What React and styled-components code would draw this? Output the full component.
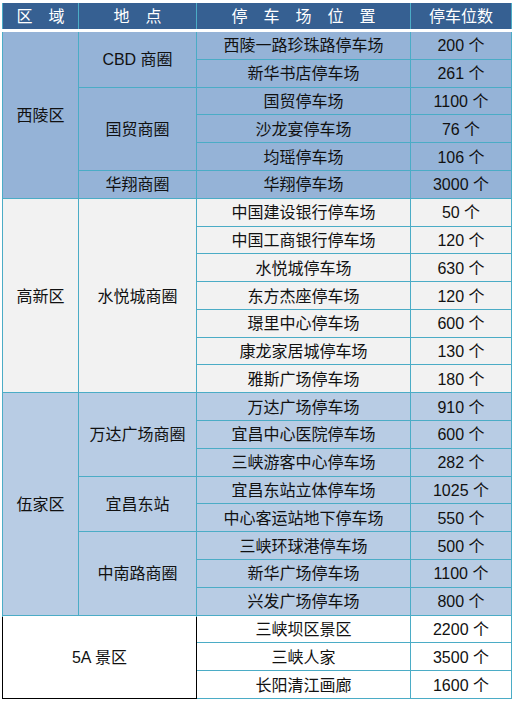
import React from "react";
import styled, { createGlobalStyle } from "styled-components";

const Global = createGlobalStyle`
  html, body { margin: 0; padding: 0; background: #ffffff; }
  body { font-family: "Liberation Sans", "Noto Sans CJK SC", sans-serif; }
`;

const Page = styled.div`
  padding: 3px 0 0 2px;
`;

const Table = styled.div`
  width: 510px;
  display: flex;
  flex-direction: column;
`;

const COLS = "75px 117px 213px 100px";

const HeaderRow = styled.div`
  display: grid;
  grid-template-columns: ${COLS};
  column-gap: 1px;
  padding: 0 1px;
  height: 26px;
  background: #4bacc6;
  border-bottom: 3px solid #ffffff;
`;

const HeadCell = styled.div`
  background: #366092;
  color: #ffffff;
  font-size: 16px;
  line-height: 1;
  padding-top: 2px;
  box-sizing: border-box;
  display: flex;
  align-items: center;
  justify-content: center;
  white-space: pre;
`;

const Body = styled.div`
  display: grid;
  grid-template-columns: ${COLS};
  grid-template-rows: repeat(24, 1fr);
  gap: 1px;
  padding: 0 1px 1px;
  height: 667px;
  box-sizing: border-box;
  background: #4bacc6;
`;

const Cell = styled.div`
  grid-row: ${(p) => p.$row} / span ${(p) => p.$span || 1};
  grid-column: ${(p) => p.$col} / span ${(p) => p.$cols || 1};
  background: ${(p) => p.$bg};
  color: #111111;
  font-size: 16px;
  line-height: 1;
  padding-top: 2px;
  box-sizing: border-box;
  display: flex;
  align-items: center;
  justify-content: center;
  white-space: nowrap;
  box-shadow: ${(p) => (p.$black ? "0 1px 0 0 #000000, -1px 1px 0 0 #000000, 1px 1px 0 0 #000000" : "none")};
`;

const districts = [
  {
    name: "西陵区",
    bg: "#95b3d7",
    areas: [
      { name: "CBD 商圈", lots: [["西陵一路珍珠路停车场", "200 个"], ["新华书店停车场", "261 个"]] },
      { name: "国贸商圈", lots: [["国贸停车场", "1100 个"], ["沙龙宴停车场", "76 个"], ["均瑶停车场", "106 个"]] },
      { name: "华翔商圈", lots: [["华翔停车场", "3000 个"]] },
    ],
  },
  {
    name: "高新区",
    bg: "#f2f2f2",
    areas: [
      {
        name: "水悦城商圈",
        lots: [
          ["中国建设银行停车场", "50 个"],
          ["中国工商银行停车场", "120 个"],
          ["水悦城停车场", "630 个"],
          ["东方杰座停车场", "120 个"],
          ["璟里中心停车场", "600 个"],
          ["康龙家居城停车场", "130 个"],
          ["雅斯广场停车场", "180 个"],
        ],
      },
    ],
  },
  {
    name: "伍家区",
    bg: "#b8cce4",
    areas: [
      { name: "万达广场商圈", lots: [["万达广场停车场", "910 个"], ["宜昌中心医院停车场", "600 个"], ["三峡游客中心停车场", "282 个"]] },
      { name: "宜昌东站", lots: [["宜昌东站立体停车场", "1025 个"], ["中心客运站地下停车场", "550 个"]] },
      { name: "中南路商圈", lots: [["三峡环球港停车场", "500 个"], ["新华广场停车场", "1100 个"], ["兴发广场停车场", "800 个"]] },
    ],
  },
  {
    name: "5A 景区",
    bg: "#ffffff",
    merged: true,
    areas: [
      { name: null, lots: [["三峡坝区景区", "2200 个"], ["三峡人家", "3500 个"], ["长阳清江画廊", "1600 个"]] },
    ],
  },
];

function buildCells() {
  const cells = [];
  let row = 1;
  districts.forEach((d) => {
    const total = d.areas.reduce((s, a) => s + a.lots.length, 0);
    cells.push(
      <Cell
        key={`d-${d.name}`}
        $row={row}
        $span={total}
        $col={1}
        $cols={d.merged ? 2 : 1}
        $bg={d.bg}
        $black={d.merged}
      >
        {d.name}
      </Cell>
    );
    d.areas.forEach((a) => {
      if (a.name) {
        cells.push(
          <Cell key={`a-${a.name}`} $row={row} $span={a.lots.length} $col={2} $bg={d.bg}>
            {a.name}
          </Cell>
        );
      }
      a.lots.forEach(([lot, count]) => {
        cells.push(
          <Cell key={`l-${lot}-${row}`} $row={row} $col={3} $bg={d.bg}>
            {lot}
          </Cell>
        );
        cells.push(
          <Cell key={`c-${lot}-${row}`} $row={row} $col={4} $bg={d.bg}>
            {count}
          </Cell>
        );
        row += 1;
      });
    });
  });
  return cells;
}

export default function App() {
  return (
    <Page>
      <Global />
      <Table>
        <HeaderRow>
          <HeadCell>区　域</HeadCell>
          <HeadCell>地　点</HeadCell>
          <HeadCell>停　车　场　位　置</HeadCell>
          <HeadCell>停车位数</HeadCell>
        </HeaderRow>
        <Body>{buildCells()}</Body>
      </Table>
    </Page>
  );
}
